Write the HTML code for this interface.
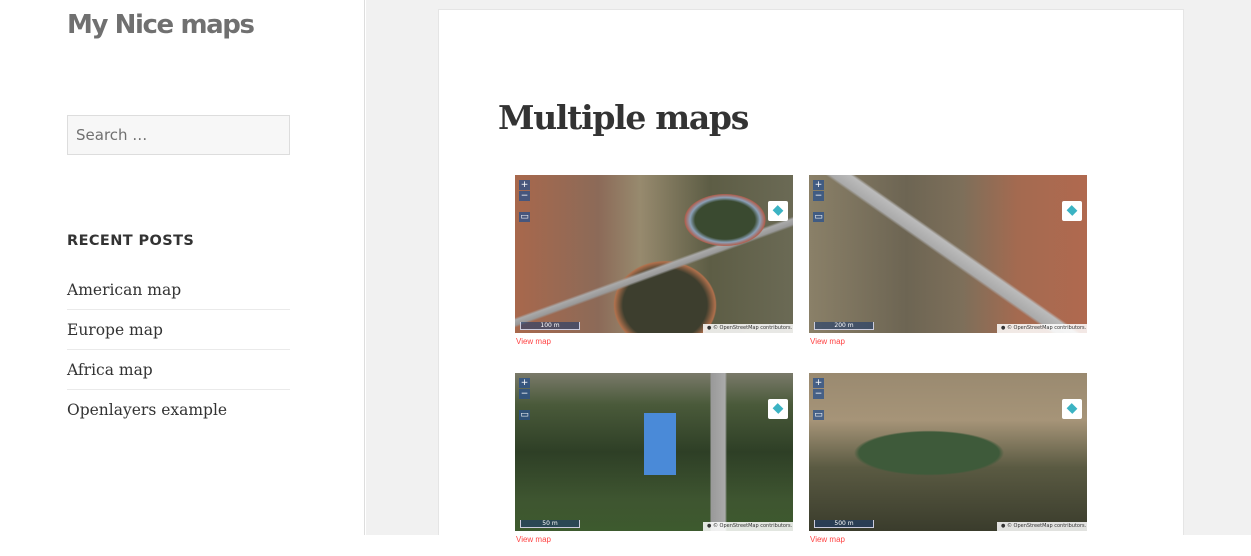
<!DOCTYPE html>
<html><head><meta charset="utf-8"><style>
*{margin:0;padding:0;box-sizing:border-box}
body{width:1251px;height:556px;overflow:hidden;background:#fff;font-family:"DejaVu Sans","Liberation Sans",sans-serif;position:relative}
.side{position:absolute;left:0;top:0;width:365px;height:535px;background:#fff;border-right:1px solid #ddd}
.gray{position:absolute;left:366px;top:0;width:885px;height:535px;background:#f1f1f1}
.title{position:absolute;left:67px;top:10px;font-size:26px;font-weight:bold;color:#707070;letter-spacing:-1.4px}
.search{position:absolute;left:67px;top:115px;width:223px;height:40px;background:#f7f7f7;border:1px solid #ddd;font-size:15px;color:#707070;padding:10px 8px}
.rp{position:absolute;left:67px;top:233px;font-size:14.5px;font-weight:bold;letter-spacing:0.4px;color:#333}
.list{position:absolute;left:67px;top:270px;width:223px;font-family:"DejaVu Serif","Liberation Serif",serif;font-size:15.5px;color:#333}
.list div{height:40px;line-height:40px;border-bottom:1px solid #eaeaea}
.card{position:absolute;left:438px;top:9px;width:746px;height:526px;background:#fff;border:1px solid #e5e5e5;border-bottom:none}
h1{position:absolute;left:498px;top:98px;font-family:"DejaVu Serif","Liberation Serif",serif;font-size:33px;font-weight:bold;color:#333;letter-spacing:-1.3px}
.map{position:absolute;width:278px;height:158px;overflow:hidden}
.ctl{position:absolute;left:4px;width:11px;height:10px;background:rgba(40,80,140,.75);color:#fff;font-size:9px;line-height:10px;text-align:center}
.lay{position:absolute;right:5px;top:26px;width:20px;height:20px;background:#fff;border-radius:2px}
.lay:after{content:"";position:absolute;left:5px;top:5px;width:10px;height:9px;background:#3bb3c3;transform:rotate(45deg) scale(.8)}
.scale{position:absolute;left:5px;bottom:3px;width:60px;height:8px;border:1px solid #ccd;border-top:none;background:rgba(30,60,110,.6);font-size:6px;color:#fff;text-align:center;line-height:8px}
.attr{position:absolute;right:0;bottom:0;width:90px;height:9px;background:rgba(255,255,255,.85);font-size:5px;line-height:9px;color:#333;padding-left:4px;white-space:nowrap;overflow:hidden}
.vm{position:absolute;font-family:"Liberation Sans",sans-serif;font-size:8px;color:#f44}
</style></head><body>
<div class="side"></div><div class="gray"></div>
<div class="title">My Nice maps</div>
<div class="search">Search …</div>
<div class="rp">RECENT POSTS</div>
<div class="list">
<div>American map</div>
<div>Europe map</div>
<div>Africa map</div>
<div style="border:none">Openlayers example</div>
</div>
<div class="card"></div>
<h1>Multiple maps</h1>

<div class="map" style="left:515px;top:175px;background:radial-gradient(ellipse 50px 32px at 210px 45px,#3a4a30 60%,#8aa0b8 70%,#b06050 80%,transparent 82%),linear-gradient(160deg,transparent 55%,#aaa 56%,#999 58%,transparent 59%),radial-gradient(ellipse 70px 60px at 150px 130px,#3d3e2e 60%,#b0704c 72%,transparent 74%),linear-gradient(90deg,#a8684c 0,#8c6a58 30%,#978a6e 45%,#5d5d45 70%,#6b6a55 100%)">
<div class="ctl" style="top:5px">+</div><div class="ctl" style="top:16px">−</div><div class="ctl" style="top:37px">▭</div>
<div class="lay"></div><div class="scale">100 m</div><div class="attr">● © OpenStreetMap contributors.</div></div>

<div class="map" style="left:809px;top:175px;background:linear-gradient(35deg,transparent 48%,#aaa 49%,#bbb 53%,transparent 54%),linear-gradient(90deg,#8a8068 0,#6d6553 35%,#7d6f5a 55%,#a46a50 75%,#b0694f 100%)">
<div class="ctl" style="top:5px">+</div><div class="ctl" style="top:16px">−</div><div class="ctl" style="top:37px">▭</div>
<div class="lay"></div><div class="scale">200 m</div><div class="attr">● © OpenStreetMap contributors.</div></div>

<div class="map" style="left:515px;top:373px;background:linear-gradient(90deg,transparent 129px,#4a8ad8 129px,#4a8ad8 161px,transparent 161px) 0 40px/100% 62px no-repeat,linear-gradient(90deg,transparent 195px,#999 196px,#aaa 210px,transparent 212px),linear-gradient(180deg,#7a7a6a 0,#4a5a3a 20%,#2e3f26 50%,#3e5530 80%,#3d5a2e 100%)">
<div class="ctl" style="top:5px">+</div><div class="ctl" style="top:16px">−</div><div class="ctl" style="top:37px">▭</div>
<div class="lay"></div><div class="scale">50 m</div><div class="attr">● © OpenStreetMap contributors.</div></div>

<div class="map" style="left:809px;top:373px;background:radial-gradient(ellipse 100px 30px at 120px 80px,#3e5a3a 70%,transparent 75%),linear-gradient(180deg,#9a8a70 0,#a69478 30%,#5a5a42 60%,#3a3c2c 100%)">
<div class="ctl" style="top:5px">+</div><div class="ctl" style="top:16px">−</div><div class="ctl" style="top:37px">▭</div>
<div class="lay"></div><div class="scale">500 m</div><div class="attr">● © OpenStreetMap contributors.</div></div>

<div class="vm" style="left:516px;top:337px">View map</div>
<div class="vm" style="left:810px;top:337px">View map</div>
<div class="vm" style="left:516px;top:535px">View map</div>
<div class="vm" style="left:810px;top:535px">View map</div>
</body></html>
